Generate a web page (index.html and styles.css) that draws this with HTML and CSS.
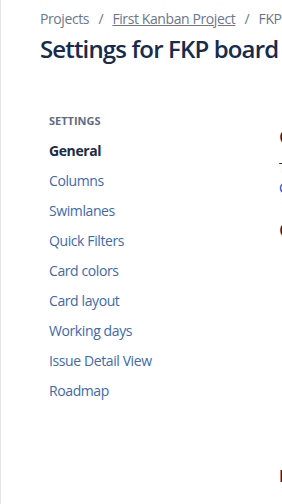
FILE: index.html
```html
<!DOCTYPE html>
<html lang="en">
<head>
    <meta charset="UTF-8">
    <meta name="viewport" content="width=device-width, initial-scale=1.0">
    <title>Settings for FKP board</title>
    <link rel="stylesheet" href="styles.css">
</head>
<body>
    <div class="page">
        <header class="page-header">
            <nav class="breadcrumbs">
                <a href="#" class="crumb">Projects</a>
                <span class="sep">/</span>
                <a href="#" class="crumb crumb-link">First Kanban Project</a>
                <span class="sep">/</span>
                <a href="#" class="crumb">FKP board</a>
            </nav>
            <h1 class="title">Settings for FKP board</h1>
        </header>

        <div class="layout">
            <!-- Settings menu -->
            <aside class="sidebar">
                <div class="sidebar-heading">Settings</div>
                <a href="#" class="nav-item active">General</a>
                <a href="#" class="nav-item">Columns</a>
                <a href="#" class="nav-item">Swimlanes</a>
                <a href="#" class="nav-item">Quick Filters</a>
                <a href="#" class="nav-item">Card colors</a>
                <a href="#" class="nav-item">Card layout</a>
                <a href="#" class="nav-item">Working days</a>
                <a href="#" class="nav-item">Issue Detail View</a>
                <a href="#" class="nav-item">Roadmap</a>
            </aside>

            <!-- Content -->
            <main class="content">
                <h2 class="section-title">General and filter</h2>
                <p class="section-text first">To change the board's name, location or filter, edit the board settings.</p>
                <p class="section-text"><a href="#" class="link">Configure board</a></p>
                <h2 class="section-title second">Column constraint</h2>
                <div class="spacer"></div>
                <h3 class="sub-title">Estimation</h3>
            </main>
        </div>
    </div>
</body>
</html>
```

FILE: styles.css
```css
body {
    margin: 0;
    padding: 0;
    font-family: "Open Sans", "Noto Sans", Arial, sans-serif;
    color: #172b4d;
    background-color: #ffffff;
    overflow: hidden;
}

.page {
    height: 504px;
    border-left: 1px solid #e4e5e8;
    padding-left: 39px;
    overflow: hidden;
}

.page-header {
    padding-top: 9px;
    white-space: nowrap;
}

.breadcrumbs {
    font-size: 14px;
    line-height: 20px;
    letter-spacing: -0.4px;
    color: #6b778c;
}

.crumb {
    color: #6b778c;
    text-decoration: none;
}

.crumb-link {
    text-decoration: underline;
}

.sep {
    padding: 0 6px;
}

.title {
    margin: 4px 0 0;
    font-size: 24px;
    line-height: 32px;
    font-weight: 600;
    letter-spacing: -0.85px;
    color: #172b4d;
}

.layout {
    display: flex;
    margin-top: 48px;
}

.sidebar {
    display: flex;
    flex-direction: column;
    flex: 0 0 230px;
    padding-left: 9px;
}

.sidebar-heading {
    font-size: 11px;
    line-height: 16px;
    font-weight: 700;
    text-transform: uppercase;
    color: #5e6c84;
    margin-bottom: 7px;
}

.nav-item {
    display: block;
    font-size: 14px;
    line-height: 30px;
    letter-spacing: -0.4px;
    color: #3d6aae;
    text-decoration: none;
    white-space: nowrap;
}

.nav-item.active {
    font-weight: 700;
    color: #172b4d;
}

.content {
    flex: 1;
    white-space: nowrap;
    padding-top: 12px;
}

.section-title {
    margin: 0;
    font-size: 20px;
    line-height: 24px;
    font-weight: 600;
}

.section-title.second {
    margin-top: 20px;
}

.section-text {
    margin: 0;
    font-size: 14px;
    line-height: 20px;
}

.section-text.first {
    margin-top: 9px;
}

.link {
    color: #0052cc;
    text-decoration: none;
}

.spacer {
    height: 224px;
}

.sub-title {
    margin: 0;
    font-size: 16px;
    line-height: 20px;
    font-weight: 600;
}
```
